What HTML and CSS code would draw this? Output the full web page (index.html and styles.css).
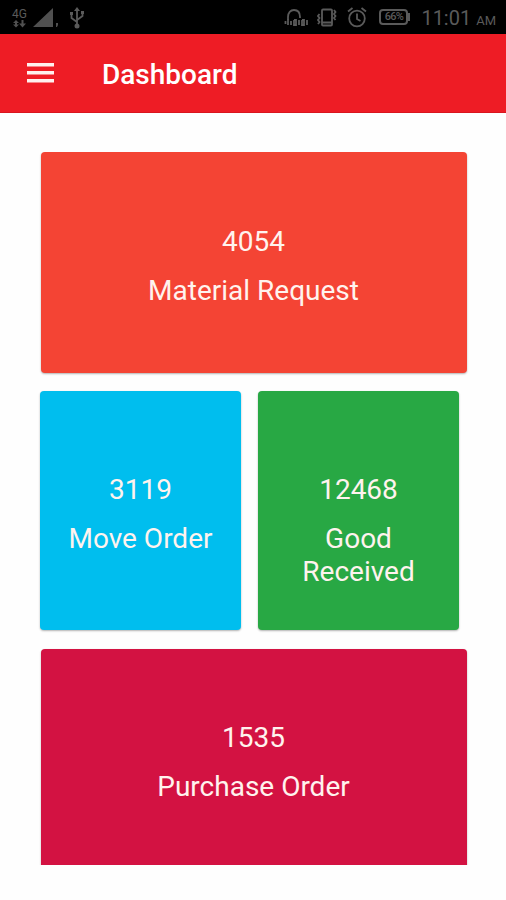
FILE: index.html
```html
<!DOCTYPE html>
<html lang="en">

<head>
    <meta charset="UTF-8">
    <meta name="viewport" content="width=device-width, initial-scale=1.0">
    <title>Dashboard</title>
    <link rel="stylesheet" href="styles.css">
</head>

<body>
    <div class="status-bar">
        <div class="status-left">
            <div class="network">
                <span>4G</span>
                <svg width="14" height="8" viewBox="0 0 14 8">
                    <path d="M4 0L7 3H5V4.500H7L4 7.500L1 4.500H3V3H1ZM9.500 0H11.500V3.500H14L10.500 7.500L7 3.500H9.500Z" />
                </svg>
            </div>
            <svg class="signal" width="28" height="20" viewBox="0 0 28 20">
                <path d="M0 19L20 0V19ZM23 15H25V17L24 19H23Z" />
            </svg>
            <svg class="usb line" width="16" height="22" viewBox="0 0 16 22">
                <path d="M8 3V18M8 15L2.500 11V7M8 13L13.500 9V6" />
                <path class="solid" d="M8 0L11 4H5ZM1 5H4V8H1ZM12 4H15V7H12Z" />
                <circle class="solid" cx="8" cy="19" r="2.500" />
            </svg>
        </div>
        <div class="status-right">
            <svg class="headset line" width="24" height="18" viewBox="0 0 24 18">
                <path d="M4 11V8C4 3.500 6.500 1 10 1S16 3.500 16 8V9" />
                <path d="M1.500 12V15M4 10V16M7 12V16M10 11V16H12V11H10M15 11V16M18 11V16H20V11H18M23 11V16" />
            </svg>
            <svg class="vibrate line" width="20" height="20" viewBox="0 0 20 20">
                <rect x="5" y="1.500" width="10" height="16" rx="1" />
                <path d="M5 14.500H15M2.500 6L1 8L2.500 10L1 12L2.500 14L1 16M17 2L18.500 4L17 6L18.500 8L17 10L18.500 12" />
            </svg>
            <svg class="alarm line" width="20" height="21" viewBox="0 0 20 21">
                <circle cx="10" cy="11.500" r="7.800" />
                <path d="M10 6.500V12L13.500 14M1 4.500L5.500 1M19 4.500L14.500 1" />
            </svg>
            <div class="battery">66%</div>
            <div class="clock">11:01 <small>AM</small></div>
        </div>
    </div>

    <header class="toolbar">
        <svg class="menu" width="27" height="20" viewBox="0 0 27 20">
            <path d="M0 0H27V3.600H0ZM0 8H27V11.600H0ZM0 16H27V19.600H0Z" />
        </svg>
        <h1>Dashboard</h1>
    </header>

    <main class="dashboard">
        <div class="card wide material">
            <p class="count">4054</p>
            <p class="label">Material Request</p>
        </div>
        <div class="row">
            <div class="card half move">
                <p class="count">3119</p>
                <p class="label">Move Order</p>
            </div>
            <div class="card half good">
                <p class="count">12468</p>
                <p class="label">Good Received</p>
            </div>
        </div>
        <div class="card wide purchase">
            <p class="count">1535</p>
            <p class="label">Purchase Order</p>
        </div>
    </main>
</body>

</html>
```
FILE: styles.css
```css
* {
    box-sizing: border-box;
    margin: 0;
}

body {
    background-color: #fefefe;
    font-family: Roboto, sans-serif;
    height: 900px;
    overflow: hidden;
}

svg {
    display: block;
    flex: none;
}

/* Status bar */
.status-bar {
    display: flex;
    justify-content: space-between;
    height: 34px;
    padding: 0 10px 0 12px;
    background-color: #000;
    color: #5a5a5a;
}

.status-bar svg {
    fill: #505050;
}

.status-bar .line {
    fill: none;
    stroke: #5a5a5a;
    stroke-width: 1.8;
}

.status-bar .solid {
    fill: #5a5a5a;
    stroke: none;
}

.status-left,
.status-right {
    display: flex;
    align-items: flex-start;
}

.network {
    width: 16px;
    padding-top: 8px;
    font-size: 12px;
    line-height: 12px;
}

.signal {
    margin: 8px 0 0 5px;
}

.usb {
    margin: 7px 0 0 8px;
}

.headset {
    margin-top: 9px;
}

.vibrate {
    margin: 8px 0 0 9px;
}

.alarm {
    margin: 7px 0 0 10px;
}

.battery {
    position: relative;
    width: 29px;
    height: 16px;
    margin: 9px 0 0 12px;
    border: 2px solid #5a5a5a;
    border-radius: 4px;
    font-size: 11px;
    font-weight: 500;
    line-height: 12px;
    letter-spacing: -0.8px;
    text-align: center;
}

.battery::after {
    content: "";
    position: absolute;
    right: -4px;
    top: 2px;
    width: 2px;
    height: 8px;
    background-color: #5a5a5a;
}

.clock {
    margin: 6px 0 0 13px;
    font-size: 20px;
    line-height: 24px;
    white-space: nowrap;
}

.clock small {
    font-size: 13px;
}

/* Toolbar */
.toolbar {
    display: flex;
    align-items: center;
    height: 79px;
    padding-left: 27px;
    background-color: #ee1c25;
    border-bottom: 1px solid #d9151e;
}

.menu {
    fill: #fff0ee;
}

.toolbar h1 {
    margin: 4px 0 0 48px;
    color: #fff;
    font-size: 28px;
    font-weight: 500;
    line-height: 32px;
}

/* Cards */
.dashboard {
    display: flex;
    flex-direction: column;
    gap: 18px;
    height: 713px;
    margin-top: 39px;
    padding: 0 39px 0 40px;
    overflow: hidden;
}

.card {
    flex: none;
    border-radius: 4px;
    color: #fff3ee;
    font-size: 28px;
    line-height: 33px;
    text-align: center;
    box-shadow: 0 1px 2px rgba(0, 0, 0, 0.3);
}

.wide {
    height: 221px;
    margin-left: 1px;
    padding: 73px 1px 0 0;
}

.row {
    display: flex;
    gap: 17px;
}

.half {
    width: 201px;
    height: 239px;
    padding: 82px 24px 0;
}

.label {
    margin-top: 16px;
}

.material {
    background-color: #f44434;
}

.move {
    background-color: #00beee;
}

.good {
    background-color: #28a844;
}

/* runs on below the scroll area */
.purchase {
    height: 240px;
    margin-top: 1px;
    padding-top: 72px;
    background-color: #d31242;
}
```
